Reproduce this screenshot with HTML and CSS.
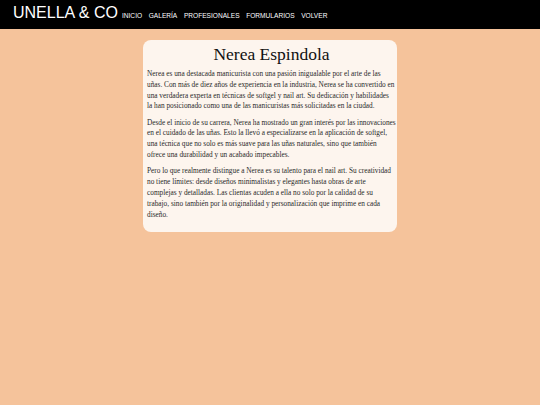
FILE: index.html
```
<!DOCTYPE html>
<html lang="es">
<head>
<meta charset="utf-8">
<title>Nerea Espindola</title>
<link rel="stylesheet" href="styles.css">
</head>
<body>
<header class="topbar">
  <span class="brand">UNELLA &amp; CO</span>
  <nav class="nav">
    <a href="#">INICIO</a>
    <a href="#">GALERÍA</a>
    <a href="#">PROFESIONALES</a>
    <a href="#">FORMULARIOS</a>
    <a href="#">VOLVER</a>
  </nav>
</header>
<main class="page">
  <article class="card">
    <h1 class="name">Nerea Espindola</h1>
    <p>Nerea es una destacada manicurista con una pasión inigualable por el arte de las uñas. Con más de diez años de experiencia en la industria, Nerea se ha convertido en una verdadera experta en técnicas de softgel y nail art. Su dedicación y habilidades la&nbsp;han posicionado como una de las manicuristas más solicitadas en la ciudad.</p>
    <p>Desde el inicio de su carrera, Nerea ha mostrado un gran interés por las innovaciones en el cuidado de las uñas. Esto la llevó a especializarse en la aplicación de softgel, una técnica que no solo es más suave para las uñas naturales, sino que también ofrece una durabilidad y un acabado impecables.</p>
    <p>Pero lo que realmente distingue a Nerea es su talento para el nail art. Su creatividad no tiene límites: desde diseños minimalistas y elegantes hasta obras de arte complejas y detalladas. Las clientas acuden a ella no solo por la calidad de su trabajo, sino también por la originalidad y personalización que imprime en cada diseño.</p>
  </article>
</main>
</body>
</html>
```
FILE: styles.css
```
html, body {
  margin: 0;
  padding: 0;
}
body {
  background: #f5c39b;
  min-height: 405px;
  font-family: "Liberation Serif", "Times New Roman", serif;
}
.topbar {
  background: #000;
  height: 29px;
  display: flex;
  align-items: baseline;
  padding: 0 13px;
  box-sizing: border-box;
  padding-top: 3px;
}
.brand {
  font-family: "Liberation Sans", Arial, sans-serif;
  color: #fff;
  font-size: 16px;
  line-height: 20px;
  margin-right: 4px;
}
.nav {
  display: flex;
  gap: 6.6px;
}
.nav a {
  font-family: "Liberation Sans", Arial, sans-serif;
  color: #fff;
  font-size: 6.6px;
  text-decoration: none;
}
.page {
  padding-top: 11px;
}
.card {
  width: 254px;
  margin: 0 auto;
  background: #fdf5ee;
  border-radius: 8px;
  padding: 3px 1px 6px 4px;
  box-sizing: border-box;
  color: #2a2a2a;
}
.name {
  font-weight: normal;
  font-size: 17.5px;
  line-height: 22px;
  text-align: center;
  margin: 0 0 4px;
  color: #111;
}
.card p {
  font-size: 7.3px;
  line-height: 10.8px;
  margin: 0 0 5.5px;
}
```
